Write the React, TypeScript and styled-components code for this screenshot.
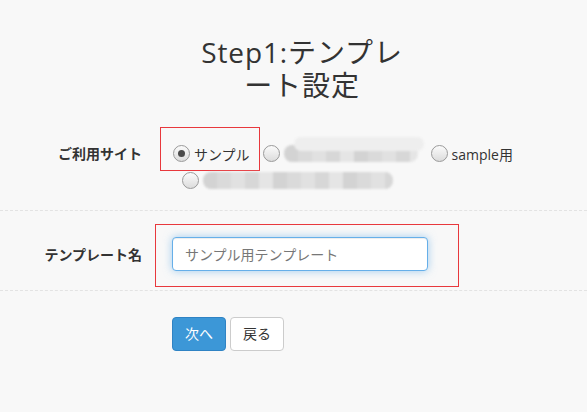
import React from "react";
import styled, { createGlobalStyle } from "styled-components";

const Global = createGlobalStyle`
  html, body { margin: 0; padding: 0; background: #f8f8f8; }
  body {
    font-family: "Open Sans", "Noto Sans CJK JP", sans-serif;
    color: #333;
    font-size: 14px;
  }
`;

const Page = styled.div`
  width: 587px;
  min-height: 412px;
  padding-top: 36px;
  box-sizing: border-box;
`;

const Title = styled.h1`
  width: 220px;
  margin: 0 0 0 192px;
  font-size: 28px;
  line-height: 33px;
  font-weight: normal;
  text-align: center;
  color: #333;
  line-break: loose;
  letter-spacing: 0.9px;
`;

const Row = styled.div<{ $pad: string; $align: string }>`
  display: grid;
  grid-template-columns: 142px 1fr;
  column-gap: 30px;
  align-items: ${(p) => p.$align};
  padding: ${(p) => p.$pad};
  border-bottom: 1px dashed #e3e3e3;
`;

const Label = styled.div`
  text-align: right;
  font-weight: bold;
  font-size: 14px;
  line-height: 27px;
  color: #333;
`;

const Options = styled.div`
  display: flex;
  flex-wrap: wrap;
  column-gap: 3px;
  width: 380px;
`;

const Option = styled.label<{ $first?: boolean; $boxed?: boolean }>`
  position: relative;
  display: inline-flex;
  align-items: center;
  gap: 4px;
  height: 27px;
  margin-left: ${(p) => (p.$first ? "1px" : "10px")};
  font-size: 14px;
  color: #333;
  &::after {
    content: "";
    display: ${(p) => (p.$boxed ? "block" : "none")};
    position: absolute;
    left: -13px;
    right: -10px;
    top: -13px;
    bottom: -4px;
    border: 1px solid #e8383d;
    pointer-events: none;
  }
`;

const Radio = styled.span<{ $checked?: boolean }>`
  width: 15px;
  height: 15px;
  border-radius: 50%;
  border: 1px solid #9a9a9a;
  background: linear-gradient(#fbfbfb, #dcdcdc);
  display: flex;
  align-items: center;
  justify-content: center;
  flex: none;
  &::before {
    content: "";
    display: ${(p) => (p.$checked ? "block" : "none")};
    width: 7px;
    height: 7px;
    border-radius: 50%;
    background: #4a4a4a;
  }
`;

const Redacted = styled.span<{ $w: number; $cloud?: boolean }>`
  position: relative;
  display: inline-block;
  width: ${(p) => p.$w}px;
  height: 17px;
  border-radius: 8px;
  background: repeating-linear-gradient(
    90deg,
    #d3d3d3 0 14px,
    #dadada 14px 28px,
    #e1e1e1 28px 42px,
    #d7d7d7 42px 56px,
    #e5e5e5 56px 70px
  );
  filter: blur(0.8px);
  &::before {
    content: "";
    display: ${(p) => (p.$cloud ? "block" : "none")};
    position: absolute;
    left: 10px;
    right: -6px;
    top: -8px;
    height: 14px;
    border-radius: 10px;
    background: #eeeeee;
  }
`;

const Field = styled.div`
  position: relative;
  width: 256px;
  &::after {
    content: "";
    position: absolute;
    left: -17px;
    right: -31px;
    top: -13px;
    bottom: -16px;
    border: 1px solid #e8383d;
    pointer-events: none;
  }
`;

const Input = styled.input`
  display: block;
  width: 256px;
  height: 34px;
  box-sizing: border-box;
  padding: 6px 12px;
  font-family: "Open Sans", "Noto Sans CJK JP", sans-serif;
  font-size: 14px;
  color: #555;
  background: #fff;
  border: 1px solid #66afe9;
  border-radius: 4px;
  outline: none;
  box-shadow: inset 0 1px 1px rgba(0, 0, 0, 0.075), 0 0 8px rgba(102, 175, 233, 0.6);
  &::placeholder { color: #777; }
`;

const Actions = styled.div`
  display: flex;
  gap: 4px;
  padding: 26px 0 0 172px;
`;

const Button = styled.button<{ $primary?: boolean }>`
  height: 34px;
  padding: 6px 12px;
  font-family: "Open Sans", "Noto Sans CJK JP", sans-serif;
  font-size: 14px;
  line-height: 20px;
  border-radius: 4px;
  border: 1px solid ${(p) => (p.$primary ? "#2f83c4" : "#cccccc")};
  background: ${(p) => (p.$primary ? "#3c97d7" : "#ffffff")};
  color: ${(p) => (p.$primary ? "#ffffff" : "#333333")};
  cursor: pointer;
`;

export default function App() {
  return (
    <Page>
      <Global />
      <Title>Step1:テンプレート設定</Title>
      <Row $pad="38px 0 16px" $align="start">
        <Label>ご利用サイト</Label>
        <Options>
          <Option $first $boxed>
            <Radio $checked />
            サンプル
          </Option>
          <Option>
            <Radio />
            <Redacted $w={134} $cloud />
          </Option>
          <Option>
            <Radio />
            sample用
          </Option>
          <Option>
            <Radio />
            <Redacted $w={190} />
          </Option>
        </Options>
      </Row>
      <Row $pad="26px 0 19px" $align="center">
        <Label>テンプレート名</Label>
        <Field>
          <Input placeholder="サンプル用テンプレート" />
        </Field>
      </Row>
      <Actions>
        <Button $primary>次へ</Button>
        <Button>戻る</Button>
      </Actions>
    </Page>
  );
}
